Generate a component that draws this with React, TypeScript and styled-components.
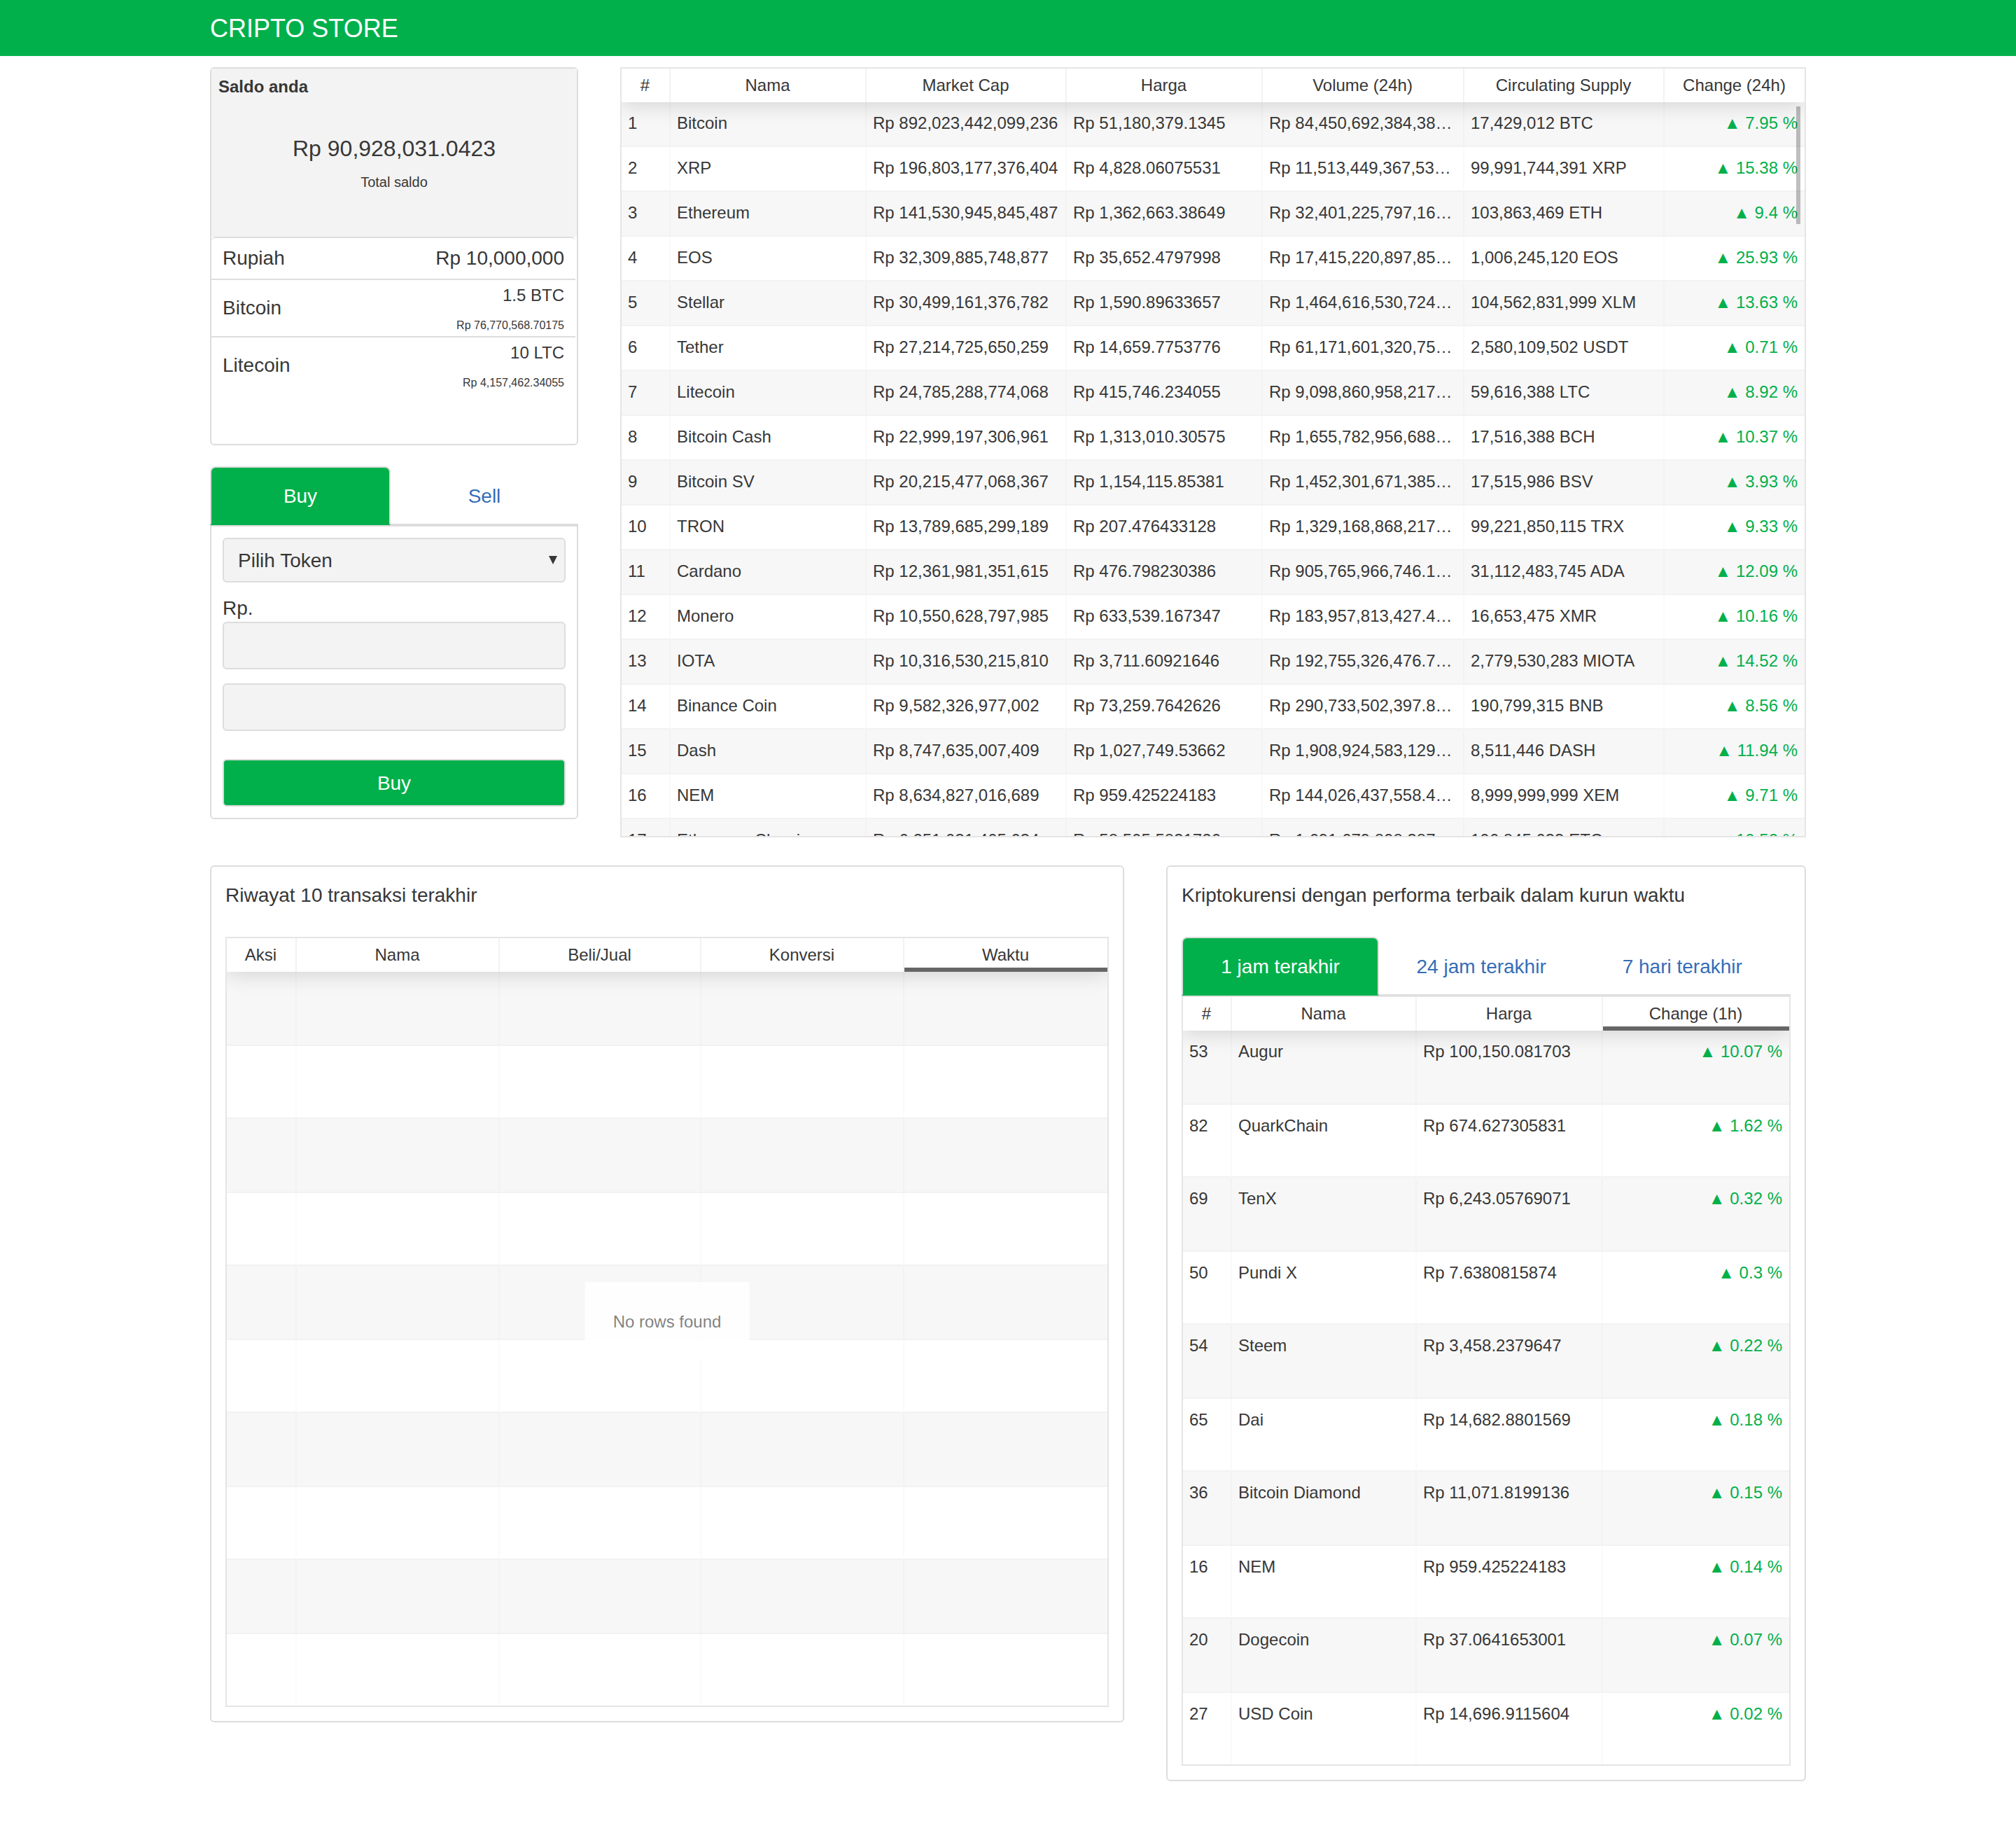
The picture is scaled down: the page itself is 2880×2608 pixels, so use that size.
import React, { useState } from "react";
import styled, { createGlobalStyle, css } from "styled-components";

const color = {
  brand: "#02b04b",
  text: "#373737",
  line: "#dddddd",
  tableLine: "#e5e5e5",
  panel: "#f3f3f3",
  stripe: "#f7f7f7",
  rowLine: "#f2f2f2",
  cellLine: "rgba(0, 0, 0, 0.02)",
  link: "#356db8",
};

const GlobalStyle = createGlobalStyle`
  *, *::before, *::after { box-sizing: border-box; }
  body {
    margin: 0;
    background: #ffffff;
    color: ${color.text};
    font-family: "Liberation Sans", Arial, Helvetica, sans-serif;
    font-size: 28px;
    line-height: 40px;
  }
  button, input, select { font: inherit; color: inherit; }
`;

/* ---------- page frame ---------- */

const Header = styled.header`
  background: ${color.brand};
  color: #ffffff;
`;

const Container = styled.div`
  width: 100%;
  max-width: 2280px;
  margin: 0 auto;
`;

const Brand = styled.h1`
  margin: 0;
  padding: 20px 0 18px;
  font-size: 36px;
  font-weight: 400;
  line-height: 42px;
`;

const Main = styled(Container).attrs({ as: "main" })`
  display: grid;
  gap: 40px;
  padding: 16px 0 64px;
`;

const Columns = styled.div<{ $template: string }>`
  display: grid;
  grid-template-columns: ${(p) => p.$template};
  column-gap: 60px;
  align-items: start;
`;

const Stack = styled.div`
  display: grid;
  gap: 30px;
`;

const Card = styled.section`
  border: 2px solid ${color.line};
  border-radius: 6px;
  background: #ffffff;
`;

const TitledCard = styled(Card)`
  padding: 20px;
`;

const CardTitle = styled.h2`
  margin: 0 0 38px;
  font-size: 28px;
  font-weight: 400;
  line-height: 42px;
`;

/* ---------- balance ---------- */

const BalanceHead = styled.div`
  height: 240px;
  padding: 10px;
  background: ${color.panel};
  text-align: center;
`;

const BalanceTitle = styled.h2`
  margin: 0 0 50px;
  font-size: 24px;
  line-height: 32px;
  text-align: left;
`;

const BalanceTotal = styled.div`
  margin-bottom: 12px;
  font-size: 32px;
  line-height: 44px;
`;

const BalanceNote = styled.div`
  font-size: 20px;
  line-height: 28px;
`;

const Holdings = styled.ul`
  height: 296px;
  margin: 0 2px 0 0;
  padding: 0;
  list-style: none;
  overflow: auto;
`;

const Holding = styled.li`
  display: flex;
  justify-content: space-between;
  align-items: center;
  min-height: 60px;
  padding: 0 16px;
  border-top: 2px solid ${color.line};
  &:first-child {
    border-radius: 6px 6px 0 0;
  }
`;

const HoldingValue = styled.div`
  display: grid;
  gap: 10px;
  padding-top: 4px;
  text-align: right;
`;

const Amount = styled.span`
  font-size: 24px;
  line-height: 36px;
`;

const Worth = styled.span`
  font-size: 16px;
  line-height: 30px;
`;

/* ---------- tabs ---------- */

const TabList = styled.div`
  display: flex;
  border-bottom: 2px solid ${color.line};
`;

const TabSlot = styled.div<{ $share: string }>`
  flex: 0 0 ${(p) => p.$share};
  margin-bottom: -2px;
  padding-right: 5px;
`;

const Tab = styled.button<{ $active: boolean }>`
  display: block;
  width: 100%;
  padding: 20px 0 18px;
  border: 2px solid transparent;
  border-radius: 8px 8px 0 0;
  background: transparent;
  color: ${color.link};
  line-height: 42px;
  cursor: pointer;
  ${(p) =>
    p.$active &&
    css`
      border-color: ${color.line};
      border-bottom-color: ${color.brand};
      background: ${color.brand};
      color: #ffffff;
    `}
`;

/* ---------- order form ---------- */

const OrderForm = styled.form`
  display: grid;
  padding: 16px;
  border: 2px solid ${color.line};
  border-radius: 0 0 6px 6px;
`;

const field = css`
  width: 100%;
  border: 2px solid ${color.line};
  border-radius: 6px;
  background: ${color.panel};
`;

const SelectBox = styled.div`
  display: grid;
  grid-template-columns: 1fr 40px;
  align-items: center;
  margin-bottom: 18px;
`;

const TokenSelect = styled.select`
  ${field}
  grid-area: 1 / 1 / 2 / 3;
  height: 64px;
  padding: 2px 20px 0;
  appearance: none;
`;

const SelectArrow = styled.svg`
  grid-area: 1 / 2 / 2 / 3;
  width: 12px;
  height: 12px;
  margin-left: 16px;
  fill: ${color.text};
  pointer-events: none;
`;

const FieldLabel = styled.label`
  line-height: 38px;
`;

const TextField = styled.input`
  ${field}
  height: 68px;
  margin-bottom: 20px;
  padding: 0 20px;
`;

const SubmitButton = styled.button`
  height: 68px;
  margin-top: 20px;
  padding: 2px 20px 0;
  border: 2px solid ${color.line};
  border-radius: 6px;
  background: ${color.brand};
  color: #ffffff;
  cursor: pointer;
`;

/* ---------- tables ---------- */

const TableFrame = styled.div<{ $height?: number }>`
  position: relative;
  height: ${(p) => (p.$height ? `${p.$height}px` : "auto")};
  border: 2px solid ${color.tableLine};
  overflow: hidden;
`;

const Table = styled.table`
  width: 100%;
  table-layout: fixed;
  border-collapse: separate;
  border-spacing: 0;
  font-size: 24px;
  line-height: 28px;
`;

const Col = styled.col<{ $width: number }>`
  width: ${(p) => p.$width}px;
`;

const Head = styled.thead`
  position: sticky;
  top: 0;
  z-index: 1;
  background: #ffffff;
  box-shadow: 0 4px 30px rgba(0, 0, 0, 0.15);
`;

const HeadCell = styled.th<{ $sorted?: boolean }>`
  height: 48px;
  padding: 10px 10px 10px 9px;
  border-right: 2px solid ${color.rowLine};
  background: #ffffff;
  font-weight: 400;
  text-align: center;
  white-space: nowrap;
  &:last-child {
    border-right: 0;
  }
  ${(p) =>
    p.$sorted &&
    css`
      box-shadow: inset 0 -6px 0 #666666;
    `}
`;

const Cell = styled.td<{ $change?: boolean }>`
  padding: 12px 10px 0 9px;
  border-right: 2px solid ${color.cellLine};
  border-bottom: 2px solid ${color.rowLine};
  background-clip: padding-box;
  line-height: 36px;
  vertical-align: top;
  white-space: nowrap;
  overflow: hidden;
  text-overflow: ellipsis;
  &:last-child {
    border-right: 0;
  }
  ${(p) =>
    p.$change &&
    css`
      color: ${color.brand};
      text-align: right;
    `}
`;

const Row = styled.tr<{ $height: number }>`
  height: ${(p) => p.$height}px;
  &:nth-child(odd) {
    background: ${color.stripe};
  }
`;

const TallBody = styled.tbody`
  & > tr:last-child > td {
    border-bottom: 0;
  }
`;

const ScrollThumb = styled.div`
  position: absolute;
  top: 54px;
  right: 6px;
  z-index: 2;
  width: 6px;
  height: 168px;
  background: rgba(0, 0, 0, 0.25);
`;

const NoData = styled.div`
  position: absolute;
  top: 50%;
  left: 50%;
  z-index: 1;
  padding: 40px;
  background: rgba(255, 255, 255, 0.8);
  color: rgba(0, 0, 0, 0.5);
  font-size: 24px;
  line-height: 34px;
  white-space: nowrap;
  transform: translate(-50%, -50%);
`;

/* ---------- data ---------- */

const marketColumns = [
  { label: "#", width: 70 },
  { label: "Nama", width: 280 },
  { label: "Market Cap", width: 286 },
  { label: "Harga", width: 280 },
  { label: "Volume (24h)", width: 288 },
  { label: "Circulating Supply", width: 286 },
  { label: "Change (24h)", width: 200 },
];

const market = [
  ["1", "Bitcoin", "892,023,442,099,236", "51,180,379.1345", "84,450,692,384,381.4", "17,429,012 BTC", "7.95"],
  ["2", "XRP", "196,803,177,376,404", "4,828.06075531", "11,513,449,367,534.2", "99,991,744,391 XRP", "15.38"],
  ["3", "Ethereum", "141,530,945,845,487", "1,362,663.38649", "32,401,225,797,163.8", "103,863,469 ETH", "9.4"],
  ["4", "EOS", "32,309,885,748,877", "35,652.4797998", "17,415,220,897,852.6", "1,006,245,120 EOS", "25.93"],
  ["5", "Stellar", "30,499,161,376,782", "1,590.89633657", "1,464,616,530,724.31", "104,562,831,999 XLM", "13.63"],
  ["6", "Tether", "27,214,725,650,259", "14,659.7753776", "61,171,601,320,754.1", "2,580,109,502 USDT", "0.71"],
  ["7", "Litecoin", "24,785,288,774,068", "415,746.234055", "9,098,860,958,217.52", "59,616,388 LTC", "8.92"],
  ["8", "Bitcoin Cash", "22,999,197,306,961", "1,313,010.30575", "1,655,782,956,688.17", "17,516,388 BCH", "10.37"],
  ["9", "Bitcoin SV", "20,215,477,068,367", "1,154,115.85381", "1,452,301,671,385.46", "17,515,986 BSV", "3.93"],
  ["10", "TRON", "13,789,685,299,189", "207.476433128", "1,329,168,868,217.28", "99,221,850,115 TRX", "9.33"],
  ["11", "Cardano", "12,361,981,351,615", "476.798230386", "905,765,966,746.1423", "31,112,483,745 ADA", "12.09"],
  ["12", "Monero", "10,550,628,797,985", "633,539.167347", "183,957,813,427.4361", "16,653,475 XMR", "10.16"],
  ["13", "IOTA", "10,316,530,215,810", "3,711.60921646", "192,755,326,476.7284", "2,779,530,283 MIOTA", "14.52"],
  ["14", "Binance Coin", "9,582,326,977,002", "73,259.7642626", "290,733,502,397.8142", "190,799,315 BNB", "8.56"],
  ["15", "Dash", "8,747,635,007,409", "1,027,749.53662", "1,908,924,583,129.63", "8,511,446 DASH", "11.94"],
  ["16", "NEM", "8,634,827,016,689", "959.425224183", "144,026,437,558.4253", "8,999,999,999 XEM", "9.71"],
  ["17", "Ethereum Classic", "6,251,031,405,034", "58,505.5831726", "1,691,679,898,387.35", "106,845,033 ETC", "10.52"],
];

const historyColumns = [
  { label: "Aksi", width: 100 },
  { label: "Nama", width: 290 },
  { label: "Beli/Jual", width: 288 },
  { label: "Konversi", width: 290 },
  { label: "Waktu", width: 290 },
];

const topColumns = [
  { label: "#", width: 70 },
  { label: "Nama", width: 264 },
  { label: "Harga", width: 266 },
  { label: "Change (1h)", width: 266 },
];

const topCoins = [
  ["53", "Augur", "100,150.081703", "10.07"],
  ["82", "QuarkChain", "674.627305831", "1.62"],
  ["69", "TenX", "6,243.05769071", "0.32"],
  ["50", "Pundi X", "7.6380815874", "0.3"],
  ["54", "Steem", "3,458.2379647", "0.22"],
  ["65", "Dai", "14,682.8801569", "0.18"],
  ["36", "Bitcoin Diamond", "11,071.8199136", "0.15"],
  ["16", "NEM", "959.425224183", "0.14"],
  ["20", "Dogecoin", "37.0641653001", "0.07"],
  ["27", "USD Coin", "14,696.9115604", "0.02"],
];

const periods = ["1 jam terakhir", "24 jam terakhir", "7 hari terakhir"];

/* Ten rows share the body; the last one has no rule under it. */
const tallRowHeight = (index: number) =>
  index === 9 ? 102 : index % 2 === 0 ? 106 : 104;

/* ---------- components ---------- */

type Column = { label: string; width: number };

function TableHead({ columns, sorted }: { columns: Column[]; sorted?: string }) {
  return (
    <>
      <colgroup>
        {columns.map((c) => (
          <Col key={c.label} $width={c.width} />
        ))}
      </colgroup>
      <Head>
        <tr>
          {columns.map((c) => (
            <HeadCell key={c.label} scope="col" $sorted={c.label === sorted}>
              {c.label}
            </HeadCell>
          ))}
        </tr>
      </Head>
    </>
  );
}

function Balance() {
  return (
    <Card>
      <BalanceHead>
        <BalanceTitle>Saldo anda</BalanceTitle>
        <BalanceTotal>Rp 90,928,031.0423</BalanceTotal>
        <BalanceNote>Total saldo</BalanceNote>
      </BalanceHead>
      <Holdings>
        <Holding>
          <span>Rupiah</span>
          <span>Rp 10,000,000</span>
        </Holding>
        <Holding>
          <span>Bitcoin</span>
          <HoldingValue>
            <Amount>1.5 BTC</Amount>
            <Worth>Rp 76,770,568.70175</Worth>
          </HoldingValue>
        </Holding>
        <Holding>
          <span>Litecoin</span>
          <HoldingValue>
            <Amount>10 LTC</Amount>
            <Worth>Rp 4,157,462.34055</Worth>
          </HoldingValue>
        </Holding>
      </Holdings>
    </Card>
  );
}

function Order() {
  const [side, setSide] = useState("Buy");
  return (
    <section>
      <TabList role="tablist">
        {["Buy", "Sell"].map((name) => (
          <TabSlot key={name} $share="50%">
            <Tab
              type="button"
              role="tab"
              aria-selected={side === name}
              $active={side === name}
              onClick={() => setSide(name)}
            >
              {name}
            </Tab>
          </TabSlot>
        ))}
      </TabList>
      <OrderForm onSubmit={(e) => e.preventDefault()}>
        <SelectBox>
          <TokenSelect aria-label="Token" defaultValue="">
            <option value="">Pilih Token</option>
          </TokenSelect>
          <SelectArrow viewBox="0 0 12 12" aria-hidden="true">
            <path d="M0 0h12L6 12z" />
          </SelectArrow>
        </SelectBox>
        <FieldLabel htmlFor="rupiah">Rp.</FieldLabel>
        <TextField id="rupiah" type="text" />
        <TextField id="amount" type="text" aria-label="Token" />
        <SubmitButton type="submit">{side}</SubmitButton>
      </OrderForm>
    </section>
  );
}

function MarketTable() {
  return (
    <TableFrame $height={1100}>
      <Table>
        <TableHead columns={marketColumns} />
        <tbody>
          {market.map(([rank, name, cap, price, volume, supply, change]) => (
            <Row key={rank} $height={64}>
              <Cell>{rank}</Cell>
              <Cell>{name}</Cell>
              <Cell>Rp {cap}</Cell>
              <Cell>Rp {price}</Cell>
              <Cell>Rp {volume}</Cell>
              <Cell>{supply}</Cell>
              <Cell $change>▲ {change} %</Cell>
            </Row>
          ))}
        </tbody>
      </Table>
      <ScrollThumb />
    </TableFrame>
  );
}

function History() {
  return (
    <TitledCard>
      <CardTitle>Riwayat 10 transaksi terakhir</CardTitle>
      <TableFrame>
        <Table>
          <TableHead columns={historyColumns} sorted="Waktu" />
          <TallBody>
            {Array.from({ length: 10 }, (_, i) => (
              <Row key={i} $height={tallRowHeight(i)}>
                {historyColumns.map((c) => (
                  <Cell key={c.label} />
                ))}
              </Row>
            ))}
          </TallBody>
        </Table>
        <NoData>No rows found</NoData>
      </TableFrame>
    </TitledCard>
  );
}

function TopPerformers() {
  const [period, setPeriod] = useState(periods[0]);
  return (
    <TitledCard>
      <CardTitle>Kriptokurensi dengan performa terbaik dalam kurun waktu</CardTitle>
      <TabList role="tablist">
        {periods.map((name) => (
          <TabSlot key={name} $share="33%">
            <Tab
              type="button"
              role="tab"
              aria-selected={period === name}
              $active={period === name}
              onClick={() => setPeriod(name)}
            >
              {name}
            </Tab>
          </TabSlot>
        ))}
      </TabList>
      <TableFrame>
        <Table>
          <TableHead columns={topColumns} sorted="Change (1h)" />
          <TallBody>
            {topCoins.map(([rank, name, price, change], i) => (
              <Row key={rank} $height={tallRowHeight(i)}>
                <Cell>{rank}</Cell>
                <Cell>{name}</Cell>
                <Cell>Rp {price}</Cell>
                <Cell $change>▲ {change} %</Cell>
              </Row>
            ))}
          </TallBody>
        </Table>
      </TableFrame>
    </TitledCard>
  );
}

export default function App() {
  return (
    <>
      <GlobalStyle />
      <Header>
        <Container>
          <Brand>CRIPTO STORE</Brand>
        </Container>
      </Header>
      <Main>
        <Columns $template="minmax(0, 526fr) minmax(0, 1694fr)">
          <Stack>
            <Balance />
            <Order />
          </Stack>
          <MarketTable />
        </Columns>
        <Columns $template="minmax(0, 1306fr) minmax(0, 914fr)">
          <History />
          <TopPerformers />
        </Columns>
      </Main>
    </>
  );
}
